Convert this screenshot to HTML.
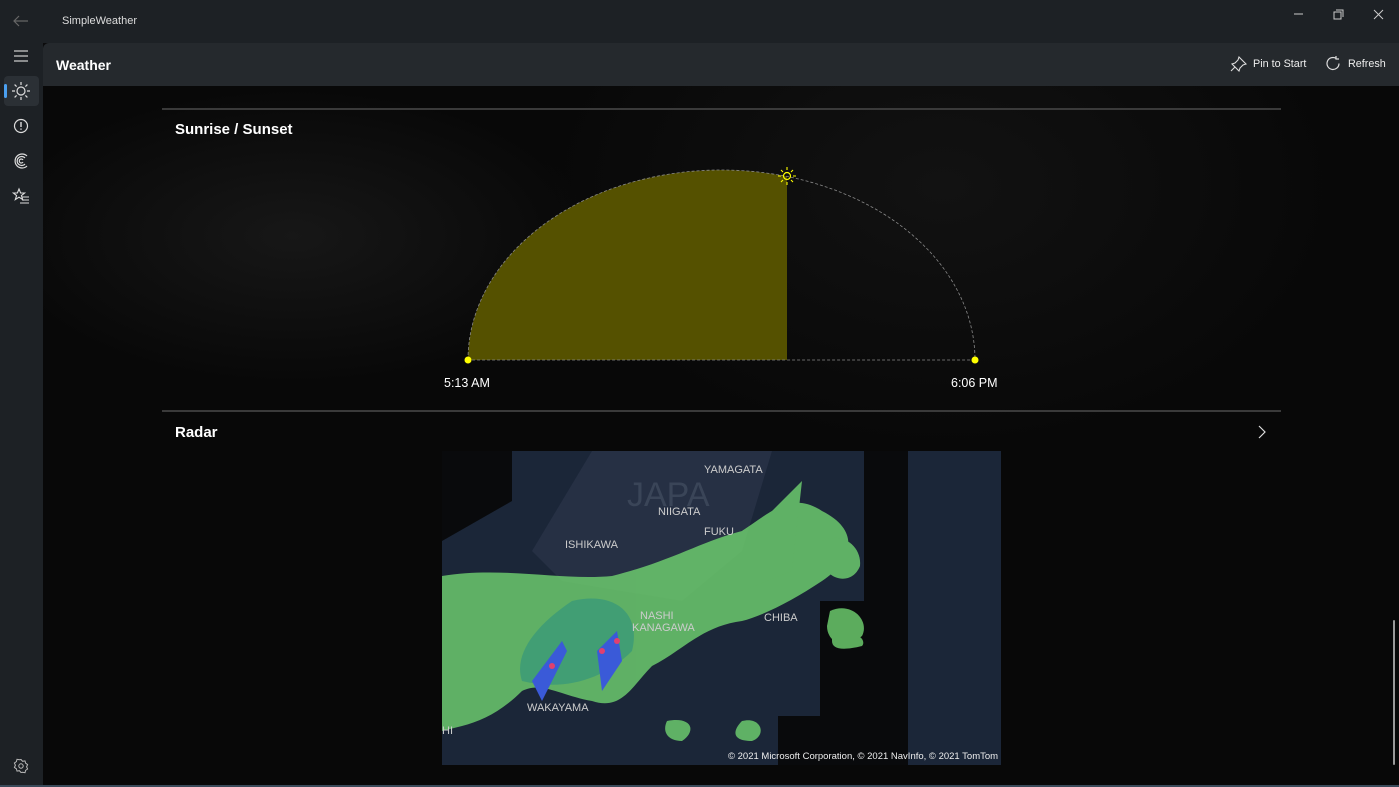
<!DOCTYPE html>
<html><head><meta charset="utf-8"><style>
*{margin:0;padding:0;box-sizing:border-box}
body{width:1399px;height:787px;overflow:hidden;background:#0b0b0c;font-family:"Segoe UI","Liberation Sans",sans-serif;color:#fff;position:relative}
.abs{position:absolute}
.tb{left:0;top:0;width:1399px;height:43px;background:#1d2125}
.side{left:0;top:43px;width:43px;height:744px;background:#1d2125}
.cmd{left:43px;top:43px;width:1356px;height:43px;background:#25292d;border-top-left-radius:6px}
.content{left:43px;top:86px;width:1356px;height:699px;background:radial-gradient(ellipse at 250px 150px,#171717,transparent 300px),radial-gradient(ellipse at 900px 100px,#121212,transparent 400px),#080808}
.hr{height:2px;background:#3a3a3a;left:162px;width:1119px}
.t{font-size:15px;font-weight:bold}
</style></head><body>
<div class="abs tb"></div>
<div class="abs side"></div>
<div class="abs cmd"></div>
<div class="abs content"></div>
<div class="abs" style="left:0;top:785px;width:1399px;height:2px;background:#3a4a5a"></div>
<svg class="abs" style="left:12px;top:14px" width="18" height="14"><path d="M16 7H2M7 2L2 7l5 5" stroke="#666" stroke-width="1.2" fill="none"/></svg>
<div class="abs" style="left:62px;top:15px;font-size:11px;color:#ddd">SimpleWeather</div>
<svg class="abs" style="left:1290px;top:8px" width="100" height="14"><path d="M4 6h9" stroke="#ccc"/><rect x="44" y="4" width="7" height="7" fill="none" stroke="#ccc"/><path d="M46 2h7v7" stroke="#ccc" fill="none"/><path d="M84 2l9 9M93 2l-9 9" stroke="#ccc"/></svg>
<svg class="abs" style="left:13px;top:49px" width="16" height="14"><path d="M1 2h14M1 7h14M1 12h14" stroke="#ccc" stroke-width="1.3"/></svg>
<div class="abs" style="left:4px;top:76px;width:35px;height:30px;background:#2b3035;border-radius:4px"></div>
<div class="abs" style="left:4px;top:84px;width:3px;height:14px;background:#4ba0f0;border-radius:2px"></div>
<svg class="abs" style="left:11px;top:81px" width="20" height="20"><circle cx="10" cy="10" r="4" fill="none" stroke="#ddd" stroke-width="1.2"/><path d="M10 1v3M10 16v3M1 10h3M16 10h3M3.6 3.6l2 2M14.4 14.4l2 2M3.6 16.4l2-2M14.4 5.6l2-2" stroke="#ddd" stroke-width="1.2"/></svg>
<svg class="abs" style="left:12px;top:117px" width="18" height="18"><circle cx="9" cy="9" r="6.5" fill="none" stroke="#ddd" stroke-width="1.2"/><path d="M9 5v5M9 11.5v1.3" stroke="#ddd" stroke-width="1.4"/></svg>
<svg class="abs" style="left:12px;top:152px" width="18" height="18"><path d="M15 4A7 7 0 1 0 15 14M13 6A4.5 4.5 0 1 0 13 12M11 8A2 2 0 1 0 11 10" stroke="#ddd" stroke-width="1.2" fill="none"/></svg>
<svg class="abs" style="left:12px;top:187px" width="18" height="18"><path d="M7 2l1.6 4h4l-3.2 2.6 1.3 4L7 10.2 3.3 12.6l1.3-4L1.4 6h4z" fill="none" stroke="#ddd" stroke-width="1.1"/><path d="M10 10h7M10 13h7M8 16h9" stroke="#ddd" stroke-width="1.1"/></svg>
<svg class="abs" style="left:13px;top:758px" width="16" height="16"><circle cx="8" cy="8" r="2.2" fill="none" stroke="#bbb"/><path d="M8 1.5l1.6 1.8 2.4-.4.6 2.3 2 1.4-1 2.2 1 2.2-2 1.4-.6 2.3-2.4-.4L8 14.5l-1.6-1.8-2.4.4-.6-2.3-2-1.4 1-2.2-1-2.2 2-1.4.6-2.3 2.4.4z" fill="none" stroke="#bbb"/></svg>
<div class="abs" style="left:56px;top:57px;font-size:14px;font-weight:bold">Weather</div>
<svg class="abs" style="left:1230px;top:56px" width="18" height="16"><path d="M9 1l7 7-3 1-3 3-1 3-7-7 3-1 3-3zM5 11l-4 4" stroke="#ddd" fill="none" stroke-width="1.1"/></svg>
<div class="abs" style="left:1253px;top:58px;font-size:10.8px;color:#eee">Pin to Start</div>
<svg class="abs" style="left:1325px;top:55px" width="17" height="17"><path d="M14 8.5A6 6 0 1 1 11 3.3M11 1v3h3" stroke="#ddd" fill="none" stroke-width="1.2"/></svg>
<div class="abs" style="left:1348px;top:58px;font-size:10.8px;color:#eee">Refresh</div>
<div class="abs hr" style="top:108px"></div>
<div class="abs t" style="left:175px;top:121px">Sunrise / Sunset</div>
<svg class="abs" style="left:440px;top:160px" width="560" height="240">
<defs><clipPath id="c"><rect x="0" y="0" width="347" height="240"/></clipPath></defs>
<path d="M28 200A253.5 190 0 0 1 535 200Z" fill="#555100" clip-path="url(#c)"/>
<path d="M28 200A253.5 190 0 0 1 535 200H28" fill="none" stroke="#888" stroke-dasharray="3 2" stroke-width="0.8"/>
<circle cx="28" cy="200" r="3.5" fill="#ff0"/><circle cx="535" cy="200" r="3.5" fill="#ff0"/>
<circle cx="347" cy="16" r="3.5" fill="none" stroke="#ff0" stroke-width="1.2"/>
<path d="M347 7v3M347 22v3M338 16h3M353 16h3M341 10l2 2M351 20l2 2M341 22l2-2M351 12l2-2" stroke="#ff0" stroke-width="1.1"/>
</svg>
<div class="abs" style="left:444px;top:376px;font-size:12.5px">5:13 AM</div>
<div class="abs" style="left:951px;top:376px;font-size:12.5px">6:06 PM</div>
<div class="abs hr" style="top:410px"></div>
<div class="abs t" style="left:175px;top:424px">Radar</div>
<svg class="abs" style="left:1257px;top:425px" width="10" height="14"><path d="M2 1l6 6-6 6" stroke="#ddd" fill="none" stroke-width="1.2"/></svg>
<svg class="abs" style="left:442px;top:451px" width="559" height="314">
<rect width="559" height="314" fill="#1b2638"/>
<path d="M0 0H70V50L0 90Z" fill="#090a0c"/>
<path d="M422 0H466V314H336V265H378V150H422Z" fill="#090a0c"/>
<path d="M150 0L330 0L300 100L240 150L120 130L90 100Z" fill="#263044"/>
<g fill="#6fd06f" opacity="0.82">
<path d="M0 125C60 115 120 130 170 125C230 110 260 90 300 80C330 60 350 40 380 60C420 80 410 110 380 130C350 150 320 165 300 170C260 175 240 200 210 215C190 235 180 260 150 250C120 245 100 230 80 240C60 260 40 270 20 275L0 280Z"/>
<path d="M300 80L330 60 360 30 350 120 300 140Z"/>
<path d="M380 90C400 80 420 95 418 115C410 135 385 130 380 110Z"/>
<path d="M388 160C410 150 428 170 420 185C400 200 385 190 385 175Z"/>
<path d="M390 182C410 176 426 188 420 195C400 200 390 198 390 190Z"/>
<path d="M225 270C250 265 255 280 240 290C225 290 220 280 225 270Z"/>
<path d="M300 270C320 265 325 285 310 290C290 290 290 280 300 270Z"/>
</g>
<g fill="#3a9a78" opacity="0.8"><path d="M130 150C170 140 200 160 190 200C160 230 120 240 80 230C70 200 100 170 130 150Z"/></g>
<g fill="#3a5ad8"><path d="M90 230L120 190 125 200 100 250Z"/><path d="M155 200L175 180 180 210 160 240Z"/></g>
<g fill="#e04070"><circle cx="110" cy="215" r="3"/><circle cx="160" cy="200" r="3"/><circle cx="175" cy="190" r="3"/></g>
<g fill="#ccc" font-size="11" font-family="Liberation Sans, sans-serif">
<text x="262" y="22">YAMAGATA</text><text x="216" y="64">NIIGATA</text><text x="123" y="97">ISHIKAWA</text><text x="262" y="84">FUKU</text>
<text x="198" y="168">NASHI</text><text x="190" y="180">KANAGAWA</text><text x="322" y="170">CHIBA</text><text x="85" y="260">WAKAYAMA</text><text x="0" y="283">HI</text>
<text x="185" y="55" font-size="34" fill="#3a4558">JAPA</text>
</g>
<text x="286" y="308" fill="#eee" font-size="9.5" font-family="Liberation Sans, sans-serif">© 2021 Microsoft Corporation, © 2021 NavInfo, © 2021 TomTom</text>
</svg>
<div class="abs" style="left:1393px;top:620px;width:2px;height:145px;background:#999;border-radius:1px"></div>
</body></html>
